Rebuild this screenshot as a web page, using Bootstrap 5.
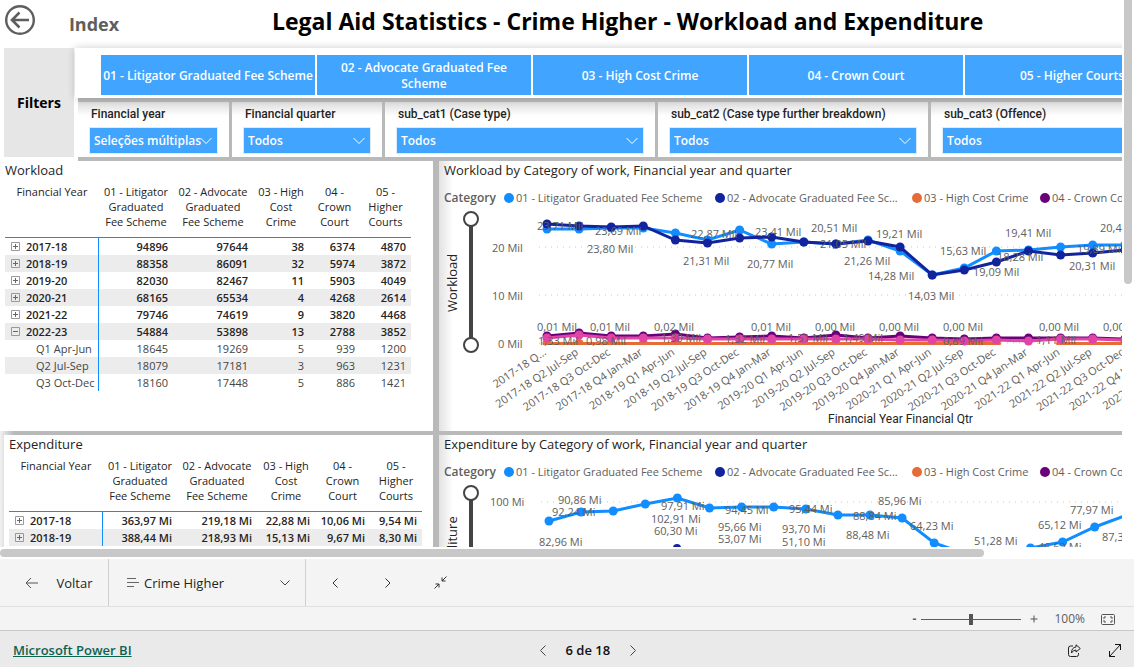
<!DOCTYPE html>
<html lang="pt">
<head>
<meta charset="utf-8">
<meta name="viewport" content="width=device-width, initial-scale=1">
<title>Legal Aid Statistics - Crime Higher</title>
<link href="https://cdn.jsdelivr.net/npm/bootstrap@5.3.0/dist/css/bootstrap.min.css" rel="stylesheet">
<style>
:root { --pbi-blue: #41a4ff; --ink: #252423; --muted: #605e5c; --seam: #b9b9b9; }
body { font-family: "Open Sans", "Noto Sans", sans-serif; font-size: 12px; line-height: 16px; color: var(--ink); background: #fff; }
button { color: inherit; }
.plain { border: 0; background: none; padding: 0; display: inline-flex; align-items: center; justify-content: center; }
.report-view { min-height: 0; }
.sheet { min-width: 1280px; }
.vbar { width: 12px; padding-left: 2px; }
.vbar span { display: block; width: 8px; height: 52%; background: #c8c8c8; border-radius: 0 0 4px 4px; }
.hbar { height: 12px; padding-top: 2px; }
.hbar span { display: block; width: 86.8%; height: 8px; background: #c8c8c8; border-radius: 4px; }

.sheet-head { height: 48px; }
.back-btn { width: 40px; }
.index-link { width: 108px; font-size: 18px; font-weight: 700; color: var(--muted); }
.sheet-title { font-size: 23px; line-height: 30px; font-weight: 700; color: #000; margin-left: 124px; padding-top: 6px; }
.filters-tag { width: 70px; background: #e6e6e6; color: #000; font-size: 14px; font-weight: 700; margin: 0 0 4px 4px; }
.tile-bar { height: 50px; padding: 7px 101px 3px 26px; gap: 2px; margin-left: 1px; box-shadow: 0 0 8px #0003; position: relative; }
.tile-btn { background: var(--pbi-blue); color: #fff; font-size: 12px; line-height: 16px; font-weight: 600; flex: 1 1 0; border: 0; padding: 2px 2px 0; }
.slicers { display: grid; grid-template-columns: 151px 150px 270px 270px 1fr; gap: 3px; background: var(--seam); padding: 4px 0; margin-left: 4px; }
.slicer { height: 55px; padding: 4px 11px; background: linear-gradient(#dcdcdc, #fff 14px); }
.slicer label { display: block; font-family: Roboto, sans-serif; font-size: 12px; font-weight: 500; line-height: 16px; margin-bottom: 5px; padding-left: 2px; }
.slicer .form-select { height: 27px; border: 1px solid #dcebf9; border-radius: 0; padding: 1px 16px 0 4px; font-size: 12px; font-weight: 600; color: #fff; line-height: 24px;
  background: var(--pbi-blue) url("data:image/svg+xml,%3Csvg xmlns='http://www.w3.org/2000/svg' viewBox='0 0 12 8'%3E%3Cpath d='M.5 1l5.500 5.500L11.500 1' fill='none' stroke='white'/%3E%3C/svg%3E") no-repeat right 5px center / 12px 8px; }

.visuals { display: grid; grid-template-columns: 433px 1fr; gap: 4px 6px; background: linear-gradient(90deg, #f2f2f2, var(--seam) 14px); }
.panel { background: #fff; height: 270px; overflow: hidden; }
.panel-table { padding-left: 5px; }
.panel-shade { background: linear-gradient(90deg, #e2e2e2, #fff 14px); }
.visual-title { font-size: 13px; line-height: 18px; font-weight: 400; margin: 0 0 4px; }
.matrix { table-layout: fixed; border-collapse: separate; border-spacing: 0; font-size: 12px; line-height: 17px; }
.matrix th, .matrix td { padding: 0 5px; white-space: nowrap; }
.matrix thead th { font-size: 11px; font-weight: 400; line-height: 15px; height: 55px; padding: 1px 0 0; vertical-align: top; text-align: center; border-bottom: 1px solid #118dff; white-space: normal; }
.matrix tbody th { border-right: 1px solid #118dff; font-weight: 600; font-size: 11px; padding-left: 6px; text-align: left; }
.matrix tbody td { font-weight: 600; font-size: 11px; text-align: right; }
.matrix tr { height: 17px; }
.matrix tbody tr:nth-child(even) { background: #ececec; }
.matrix .quarter th, .matrix .quarter td { font-weight: 400; color: #444; }
.matrix .quarter th { padding-left: 31px; padding-right: 0; }
.matrix .plain { width: 9px; height: 17px; margin-right: 6px; vertical-align: top; }

.chart { display: block; }
.chart text { font-size: 12px; fill: var(--muted); }
.chart .tick { font-size: 11px; }
.chart .axis-name { font-family: Roboto, "Open Sans", sans-serif; font-size: 12px; fill: var(--ink); }
.chart .side-name, .chart .chart-title { font-size: 13px; fill: var(--ink); }
.chart .data-label { font-size: 11px; }
.chart .legend-text { font-size: 11px; }
.chart .legend-name { font-size: 12px; font-weight: 600; }

.tool-row { height: 48px; background: #f4f4f4; border-bottom: 1px solid #e0e0e0; font-size: 13px; }
.tool-row .voltar { width: 109px; border-right: 1px solid #d0d0d0; gap: 18px; padding-left: 10px; }
.tool-row .page-pick { width: 197px; border-right: 1px solid #d0d0d0; padding: 0 15px 0 18px; gap: 5px; }
.tool-row .step { width: 53px; }
.zoom-row { height: 23px; background: #f4f4f4; color: var(--muted); padding: 1px 19px 0 0; }
.zoom-range { appearance: none; -webkit-appearance: none; width: 100px; height: 12px; margin: 0 5px; background: linear-gradient(#605e5c, #605e5c) no-repeat center / 100% 1px; }
.zoom-range::-webkit-slider-thumb { -webkit-appearance: none; width: 4px; height: 11px; background: #555; }
.foot-row { height: 37px; background: #eaeaea; border-top: 1px solid #c8c8c8; color: #111; font-size: 13px; padding: 2px 13px 0; }
.brand-link { color: #0e6251; font-weight: 600; text-decoration: underline; }
.foot-icons { gap: 24px; width: 77px; }
</style>
</head>
<body>
<div class="d-flex flex-column vh-100 overflow-hidden">
  <main class="report-view d-flex flex-fill overflow-hidden">
    <div class="flex-fill overflow-hidden">
      <div class="sheet">
        <header class="sheet-head d-flex align-items-start">
          <button class="plain back-btn mt-1" aria-label="Back"><svg width="32" height="32" viewBox="0 0 32 32" fill="none" stroke="#605e5c"><circle cx="16" cy="16" r="13.800" stroke-width="2.400"/><path d="M25 16H8M15.500 8.500L8 16l7.500 7.500" stroke-width="2.600"/></svg></button>
          <button class="plain index-link mt-2"><span class="pt-2">Index</span></button>
          <h1 class="sheet-title mb-0">Legal Aid Statistics - Crime Higher - Workload and Expenditure</h1>
        </header>
        <div class="d-flex">
          <div class="filters-tag d-flex align-items-center justify-content-center">Filters</div>
          <div class="flex-fill">
            <div class="tile-bar d-flex bg-white">
              <button class="tile-btn">01 - Litigator Graduated Fee Scheme</button>
              <button class="tile-btn">02 - Advocate Graduated Fee Scheme</button>
              <button class="tile-btn">03 - High Cost Crime</button>
              <button class="tile-btn">04 - Crown Court</button>
              <button class="tile-btn">05 - Higher Courts</button>
            </div>
            <div class="slicers">
              <div class="slicer"><label for="s1">Financial year</label><select id="s1" class="form-select"><option>Seleções múltiplas</option></select></div>
              <div class="slicer"><label for="s2">Financial quarter</label><select id="s2" class="form-select"><option>Todos</option></select></div>
              <div class="slicer"><label for="s3">sub_cat1 (Case type)</label><select id="s3" class="form-select"><option>Todos</option></select></div>
              <div class="slicer"><label for="s4">sub_cat2 (Case type further breakdown)</label><select id="s4" class="form-select"><option>Todos</option></select></div>
              <div class="slicer"><label for="s5">sub_cat3 (Offence)</label><select id="s5" class="form-select"><option>Todos</option></select></div>
            </div>
          </div>
        </div>
        <div class="visuals">
          <section class="panel panel-table">
            <h2 class="visual-title">Workload</h2>
            <table class="matrix" id="workload">
              <colgroup><col style="width:94px"><col style="width:74px"><col style="width:80px"><col style="width:56px"><col style="width:51px"><col style="width:51px"></colgroup>
            </table>
          </section>
          <section class="panel panel-shade"><svg class="chart" id="workload-chart" width="841" height="270" role="img" aria-label="Workload by category of work"></svg></section>
          <section class="panel panel-table ms-1">
            <h2 class="visual-title">Expenditure</h2>
            <table class="matrix" id="expenditure">
              <colgroup><col style="width:94px"><col style="width:74px"><col style="width:80px"><col style="width:58px"><col style="width:55px"><col style="width:52px"></colgroup>
            </table>
          </section>
          <section class="panel panel-shade"><svg class="chart" id="expenditure-chart" width="841" height="270" role="img" aria-label="Expenditure by category of work"></svg></section>
        </div>
      </div>
    </div>
    <div class="vbar flex-shrink-0"><span></span></div>
  </main>
  <div class="hbar flex-shrink-0"><span></span></div>

  <nav class="tool-row d-flex flex-shrink-0">
    <button class="plain voltar"><svg width="13" height="12" viewBox="0 0 13 12" fill="none" stroke="#555"><path d="M13 6H1M6 1L1 6l5 5"/></svg>Voltar</button>
    <button class="plain page-pick"><svg width="12" height="9" viewBox="0 0 12 9" fill="none" stroke="#666"><path d="M0 .5h9M0 4.500h12M0 8.500h7"/></svg><span>Crime Higher</span><svg class="ms-auto" width="10" height="6" viewBox="0 0 10 6" fill="none" stroke="#444"><path d="M.5.5L5 5 9.500.5"/></svg></button>
    <button class="plain step" style="margin-left:2px" aria-label="Previous"><svg width="6" height="10" viewBox="0 0 6 10" fill="none" stroke="#333"><path d="M5.500.5L1 5l4.500 4.500"/></svg></button>
    <button class="plain step" aria-label="Next"><svg width="6" height="10" viewBox="0 0 6 10" fill="none" stroke="#333"><path d="M.5.5L5 5 .5 9.500"/></svg></button>
    <button class="plain step" aria-label="Collapse"><svg width="13" height="13" viewBox="0 0 13 13" fill="none" stroke="#333"><path d="M12.500.5L8 5M8 1.500V5h3.500M.5 12.500L5 8M1.500 8H5v3.500"/></svg></button>
  </nav>
  <div class="zoom-row d-flex flex-shrink-0 align-items-center justify-content-end">
    <button class="plain fw-bold" aria-label="Zoom out">-</button>
    <input type="range" class="zoom-range" min="0" max="200" value="100" aria-label="Zoom">
    <button class="plain ms-1" aria-label="Zoom in"><svg width="8" height="8" viewBox="0 0 8 8" stroke="#555"><path d="M4 0.500v7M.5 4h7"/></svg></button>
    <span class="mx-3">100%</span>
    <button class="plain" aria-label="Fit to page"><svg width="14" height="11" viewBox="0 0 14 11" fill="none" stroke="#555"><rect x=".5" y=".5" width="13" height="10" rx="1"/><path d="M5 3H3v2M9 3h2v2M5 8H3V6M9 8h2V6"/></svg></button>
  </div>
  <footer class="foot-row d-flex flex-shrink-0 align-items-center justify-content-between">
    <a href="#" class="brand-link">Microsoft Power BI</a>
    <div class="d-flex align-items-center fw-semibold">
      <button class="plain me-3" aria-label="Previous page"><svg width="6" height="11" viewBox="0 0 6 11" fill="none" stroke="#444"><path d="M5.500.5l-5 5 5 5"/></svg></button>
      <span class="mx-1">6 de 18</span>
      <button class="plain ms-3" aria-label="Next page"><svg width="6" height="11" viewBox="0 0 6 11" fill="none" stroke="#444"><path d="M.5.5l5 5-5 5"/></svg></button>
    </div>
    <div class="foot-icons d-flex justify-content-end align-items-center">
      <button class="plain me-1" aria-label="Share"><svg width="13" height="13" viewBox="0 0 13 13" fill="none" stroke="#222"><path d="M5 2H2.500Q.5 2 .5 4v6.500q0 2 2 2h6q2 0 2-2V9"/><path d="M8 .8L12.300 4.500 8 8V6Q5 6 3.500 9 3.500 3.500 8 3z" stroke-linejoin="round"/></svg></button>
      <button class="plain" aria-label="Full screen"><svg width="12" height="13" viewBox="0 0 12 13" fill="none" stroke="#111"><path d="M.5 12.500l11-12M6 .5h5.500V6M.5 7v5.500H6"/></svg></button>
    </div>
  </footer>
</div>
<script src="https://cdn.jsdelivr.net/npm/bootstrap@5.3.0/dist/js/bootstrap.bundle.min.js"></script>
<script>
const heads = ["Financial Year", "01 - Litigator<br>Graduated<br>Fee Scheme", "02 - Advocate<br>Graduated<br>Fee Scheme", "03 - High<br>Cost<br>Crime", "04 -<br>Crown<br>Court", "05 -<br>Higher<br>Courts"];
function fillMatrix(id, rows) {
  let html = "<thead><tr>" + heads.map(h => `<th scope="col">${h}</th>`).join("") + "</tr></thead><tbody>";
  for (const [kind, name, ...cells] of rows) {
    const icon = kind === "q" ? "" : `<button class="plain" aria-label="Toggle ${name}"><svg width="9" height="9" viewBox="0 0 9 9" fill="none" stroke="#999"><path d="M.5.5h8v8h-8z"/><path stroke="#666" d="M2 4.500h5${kind === "+" ? "M4.500 2v5" : ""}"/></svg></button>`;
    html += `<tr class="${kind === "q" ? "quarter" : ""}"><th scope="row">${icon}${name}</th>` + cells.map(c => `<td>${c}</td>`).join("") + "</tr>";
  }
  document.getElementById(id).insertAdjacentHTML("beforeend", html + "</tbody>");
}
fillMatrix("workload", [
  ["+", "2017-18", 94896, 97644, 38, 6374, 4870], ["+", "2018-19", 88358, 86091, 32, 5974, 3872],
  ["+", "2019-20", 82030, 82467, 11, 5903, 4049], ["+", "2020-21", 68165, 65534, 4, 4268, 2614],
  ["+", "2021-22", 79746, 74619, 9, 3820, 4468], ["-", "2022-23", 54884, 53898, 13, 2788, 3852],
  ["q", "Q1 Apr-Jun", 18645, 19269, 5, 939, 1200], ["q", "Q2 Jul-Sep", 18079, 17181, 3, 963, 1231],
  ["q", "Q3 Oct-Dec", 18160, 17448, 5, 886, 1421]]);
fillMatrix("expenditure", [
  ["+", "2017-18", "363,97 Mi", "219,18 Mi", "22,88 Mi", "10,06 Mi", "9,54 Mi"],
  ["+", "2018-19", "388,44 Mi", "218,93 Mi", "15,13 Mi", "9,67 Mi", "8,30 Mi"]]);

const colors = { litigator: "#118dff", advocate: "#12239e", high: "#e66c37", crown: "#6b007b", courts: "#e044a7" };
const stepX = 32.1;
const label = (x, y, t, cls = "data-label") => `<text class="${cls}" x="${x}" y="${y}">${t}</text>`;
const grid = (y, x) => `<path d="M${x} ${y}H841" stroke="#c8c6c4" stroke-dasharray="1 5"/>`;
function series(x0, ys, color, first = 0) {
  const pts = ys.map((y, i) => [x0 + (i + first) * stepX, y]);
  return `<polyline points="${pts.join(" ")}" fill="none" stroke="${color}" stroke-width="3"/>` +
    pts.map(([x, y]) => `<circle cx="${x}" cy="${y}" r="4.500" fill="${color}"/>`).join("");
}
function frame(title) {
  const items = [[70, "litigator", "01 - Litigator Graduated Fee Scheme"], [281, "advocate", "02 - Advocate Graduated Fee Sc..."], [478, "high", "03 - High Cost Crime"], [606, "crown", "04 - Crown Court"]];
  return label(5, 14, title, "chart-title") + label(5, 41, "Category", "legend-name") +
    items.map(([x, k, t]) => `<circle cx="${x}" cy="37" r="5" fill="${colors[k]}"/>` + label(x + 7, 41, t, "legend-text")).join("");
}
const slider = bottom => `<path d="M32 58V${bottom}" stroke="#444" stroke-width="4"/><circle cx="32" cy="58" r="7" fill="#fff" stroke="#444" stroke-width="2"/><circle cx="32" cy="${bottom}" r="7" fill="#fff" stroke="#444" stroke-width="2"/>`;

const quarters = ["Q1 Apr-Jun", "Q2 Jul-Sep", "Q3 Oct-Dec", "Q4 Jan-Mar"];
let w = frame("Workload by Category of work, Financial year and quarter") + slider(184);
w += `<text class="side-name" transform="translate(18 151) rotate(-90)">Workload</text>`;
w += grid(86, 100) + grid(134, 100) + grid(182, 100);
w += label(53, 91, "20 Mil", "tick") + label(53, 139, "10 Mil", "tick") + label(59, 187, "0 Mil", "tick");
w += series(108, Array(15).fill(182.5), colors.high) + series(108, Array(4).fill(182.5), colors.high, 16);
w += `<path d="M90 184H841V192H90Z" fill="#fff"/>`;
w += series(108, [68, 68, 67, 67, 72, 79, 69, 83, 81, 83, 79, 90, 114, 107, 90, 89, 86, 84, 84, 83], colors.litigator);
w += series(108, [63, 65, 66, 65, 79, 82, 77, 76, 81, 83, 80, 86, 114, 109, 101, 90, 94, 92, 89, 88], colors.advocate);
w += series(108, [175, 172, 175, 175, 173, 177, 176, 175, 177, 174, 177, 175, 177, 178, 177, 177, 177, 177, 178, 178], colors.crown);
w += series(108, [177, 174, 177, 177, 177, 178, 178, 178, 178, 178, 178, 179, 179, 180, 179, 180, 178, 178, 179, 179], colors.courts);
w += [[98, 69, "23,71 Mil"], [156, 74, "23,69 Mil"], [148, 92, "23,80 Mil"], [252, 77, "22,87 Mil"], [244, 104, "21,31 Mil"], [316, 75, "23,41 Mil"],
  [308, 107, "20,77 Mil"], [372, 71, "20,51 Mil"], [381, 87, "21,05 Mil"], [405, 104, "21,26 Mil"], [437, 77, "19,21 Mil"], [429, 119, "14,28 Mil"],
  [469, 139, "14,03 Mil"], [501, 94, "15,63 Mil"], [534, 115, "19,09 Mil"], [558, 100, "18,28 Mil"], [566, 76, "19,41 Mil"], [630, 109, "20,31 Mil"],
  [638, 92, "19,89 Mil"], [661, 71, "20,46 Mil"],
  [98, 170, "0,01 Mil"], [151, 170, "0,01 Mil"], [215, 170, "0,02 Mil"], [312, 170, "0,01 Mil"], [376, 170, "0,00 Mil"], [440, 170, "0,00 Mil"],
  [504, 170, "0,00 Mil"], [600, 170, "0,00 Mil"], [664, 170, "0,00 Mil"],
  [99, 184, "1,33 Mil"], [147, 184, "0,98 Mil"], [222, 181, "1,30 Mil"], [286, 182, "1,32 Mil"], [349, 181, "1,51 Mil"], [404, 181, "1,49 Mil"],
  [504, 184, "0,89 Mil"], [597, 183, "1,11 Mil"]].map(a => label(...a)).join("");
for (let i = 0; i < 22; i++) {
  const year = 2017 + Math.floor(i / 4);
  const text = i ? `${year}-${year - 1999} ${quarters[i % 4]}` : "2017-18 Q...";
  w += `<text class="tick" text-anchor="end" transform="translate(${108 + i * stepX} 193) rotate(-34)">${text}</text>`;
}
w += label(389, 262, "Financial Year Financial Qtr", "axis-name");
document.getElementById("workload-chart").innerHTML = w;

let e = frame("Expenditure by Category of work, Financial year and quarter") + slider(184);
e += `<text class="side-name" transform="translate(18 155) rotate(-90)">Expenditure</text>`;
e += grid(67, 102) + label(51, 71, "100 Mi", "tick");
e += series(110, [86, 77, 76, 69, 63, 73, 72, 72, 74, 80, 80, 83, 108, 119, 121, 113, 107, 92, 80, 74], colors.litigator);
e += `<circle cx="238" cy="113" r="4" fill="${colors.advocate}"/>`;
e += [[119, 69, "90,86 Mi"], [113, 81, "92,24 Mi"], [100, 111, "82,96 Mi"], [222, 75, "97,91 Mi"], [212, 88, "102,91 Mi"], [215, 100, "60,30 Mi"],
  [286, 79, "94,45 Mi"], [279, 96, "95,66 Mi"], [279, 108, "53,07 Mi"], [350, 78, "95,44 Mi"], [343, 98, "93,70 Mi"], [343, 111, "51,10 Mi"],
  [414, 85, "88,84 Mi"], [407, 104, "88,48 Mi"], [439, 70, "85,96 Mi"], [471, 95, "64,23 Mi"], [535, 110, "51,28 Mi"], [599, 94, "65,12 Mi"],
  [599, 116, "46,62 Mi"], [631, 79, "77,97 Mi"], [663, 106, "87,35 Mi"]].map(a => label(...a)).join("");
document.getElementById("expenditure-chart").innerHTML = e;
</script>
</body>
</html>
